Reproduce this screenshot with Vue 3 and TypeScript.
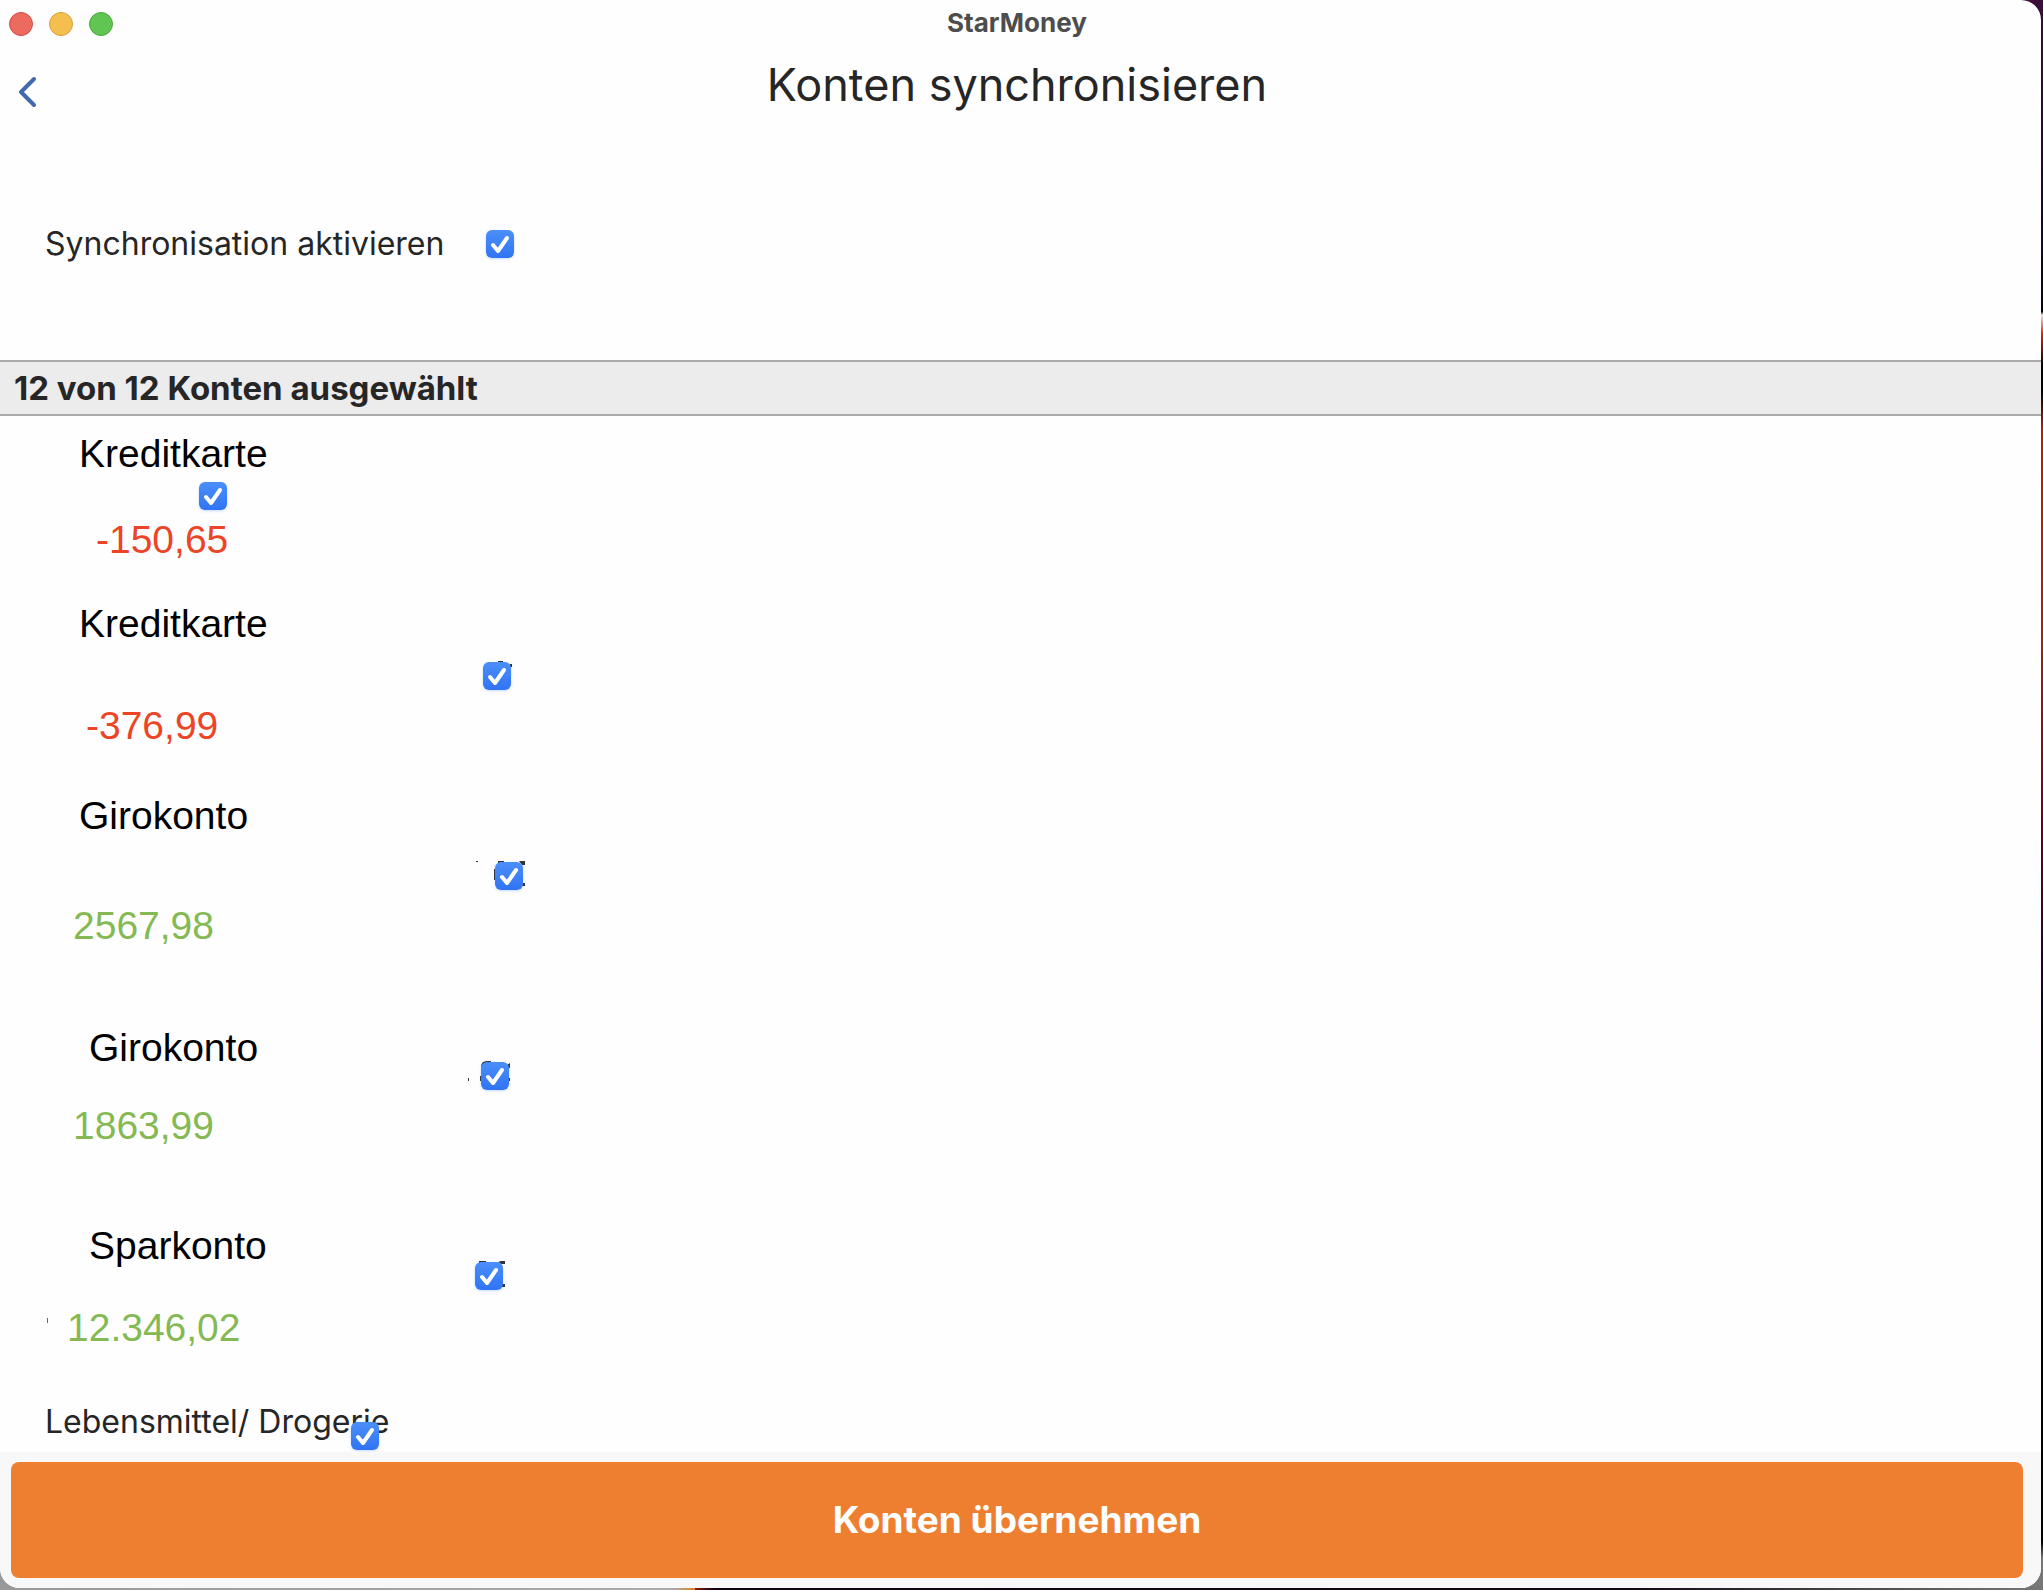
<script setup lang="ts">
import { ref } from 'vue'

interface Account {
  id: string
  name: string
  balance?: string
  kind: 'debit' | 'credit' | 'plain'
  layout: string
  remnant?: string
}

const syncEnabled = ref(true)

const accounts: Account[] = [
  { id: 'k1', name: 'Kreditkarte', balance: '-150,65', kind: 'debit', layout: 'row-card-short' },
  { id: 'k2', name: 'Kreditkarte', balance: '-376,99', kind: 'debit', layout: 'row-card', remnant: 'M25 9h5v1h-5zM37 12h2v3h-2z' },
  { id: 'g1', name: 'Girokonto', balance: '2567,98', kind: 'credit', layout: 'row-giro', remnant: 'M-9 9h2v1h-2zM13 9h6v4h-6zM9 17h3v11h-3zM34 9h6v4h-3zM36 31h4v3h-4z' },
  { id: 'g2', name: 'Girokonto', balance: '1863,99', kind: 'credit', layout: 'row-giro-low', remnant: 'M-3 26h1v3h-1zM10 15q0-6 6-6h4v4h-4zM9 24h2v5h-2zM36 13l3-2v5h-3zM37 26h2v3h-2z' },
  { id: 's1', name: 'Sparkonto', balance: '12.346,02', kind: 'credit', layout: 'row-savings', remnant: 'M14 9h7v2h-7zM33 10l3-1h4v3h-4zM36 32h4v3h-4z' },
  { id: 'l1', name: 'Lebensmittel/ Drogerie', kind: 'plain', layout: 'row-plain' },
]

const selected = ref<string[]>(accounts.map((a) => a.id))
</script>

<template>
  <div class="desktop">
    <main class="window">
      <div class="titlebar">
        <div class="lights">
          <button class="light close" type="button" aria-label="Schließen"></button>
          <button class="light minimize" type="button" aria-label="Minimieren"></button>
          <button class="light zoom" type="button" aria-label="Zoomen"></button>
        </div>
        <span class="app-name">StarMoney</span>
      </div>

      <header class="header">
        <button class="back" type="button" aria-label="Zurück">
          <svg width="20" height="32" viewBox="0 0 20 32" fill="none">
            <path d="M17 3 4 16l13 13" stroke="#4169ad" stroke-width="4" stroke-linecap="round" stroke-linejoin="round" />
          </svg>
        </button>
        <h1>Konten synchronisieren</h1>
      </header>

      <section class="sync">
        <label for="sync">Synchronisation aktivieren</label>
        <span class="check">
          <input id="sync" v-model="syncEnabled" type="checkbox" />
          <svg class="tick" viewBox="0 0 28 28"><path d="m7 15 5 6 9-13" /></svg>
        </span>
      </section>

      <h2 class="summary">12 von 12 Konten ausgewählt</h2>

      <ul class="accounts">
        <li v-for="a in accounts" :key="a.id" class="account" :class="[a.layout, a.kind]">
          <div class="details">
            <label class="name" :for="a.id">{{ a.name }}</label>
            <span v-if="a.balance" class="balance">{{ a.balance }}</span>
          </div>
          <span class="check">
            <svg v-if="a.remnant" class="remnant" viewBox="0 0 48 48"><path :d="a.remnant" /></svg>
            <input :id="a.id" v-model="selected" :value="a.id" type="checkbox" />
            <svg class="tick" viewBox="0 0 28 28"><path d="m7 15 5 6 9-13" /></svg>
          </span>
        </li>
      </ul>

      <footer class="footer">
        <button class="apply" type="button">Konten übernehmen</button>
      </footer>
    </main>
  </div>
</template>

<style>
body {
  margin: 0;
}
</style>

<style scoped>
.desktop {
  box-sizing: border-box;
  height: 100vh;
  padding: 0 2px 2px 0;
  font-family: Inter, "Liberation Sans", sans-serif;
  color: #262626;
  background:
    linear-gradient(90deg, #999 0, #aaa 33%, #e08020 34%, #8c1c10 34%, #0c0210 35%, #140818 80%, #444 90%, #777) bottom / 100% 3px no-repeat,
    linear-gradient(#3a0f3a 0, #12001e 19%, #000 19.6%, #e8e4dc 19.8%, #d0281a 21%, #000 23%, #000 24.6%, #b02010 27%, #a02414 40%, #600020 53%, #200030 61%, #000 68%, #000 97%, #777 98%) right / 30px 100% no-repeat,
    #999;
}
.window {
  display: flex;
  flex-direction: column;
  height: 100%;
  overflow: hidden;
  background: #fefefe;
  border-radius: 0 20px 20px 20px;
}
.titlebar,
.header {
  display: grid;
  align-items: center;
  padding-right: 7px;
}
.titlebar > *,
.header > * {
  grid-area: 1 / 1;
}
.titlebar {
  height: 48px;
}
.lights {
  display: flex;
  gap: 16px;
  padding-left: 9px;
}
.light {
  width: 24px;
  height: 24px;
  padding: 0;
  border: 1px solid;
  border-radius: 50%;
}
.close {
  background: #ec6a5e;
  border-color: #d05045;
}
.minimize {
  background: #f4bf4f;
  border-color: #d8a13a;
}
.zoom {
  background: #61c554;
  border-color: #4ca63c;
}
.app-name {
  justify-self: center;
  padding-bottom: 2px;
  font-size: 26px;
  font-weight: 700;
  line-height: 32px;
  color: #4d4d4d;
}
.header {
  height: 88px;
}
.back {
  justify-self: start;
  height: 32px;
  margin: 0 0 0 17px;
  padding: 0;
  background: none;
  border: 0;
}
.back svg {
  display: block;
}
h1 {
  justify-self: center;
  align-self: start;
  margin: 7px 0 0;
  font-size: 45px;
  font-weight: 400;
  line-height: 60px;
}
.sync {
  display: flex;
  align-items: center;
  height: 216px;
  gap: 42px;
  padding-left: 45px;
  font-size: 32px;
  line-height: 40px;
}
.check {
  position: relative;
  display: block;
  width: 28px;
  height: 28px;
}
.check input {
  position: relative;
  display: block;
  width: 28px;
  height: 28px;
  margin: 0;
  appearance: none;
  background: #fff;
  border-radius: 6px;
  box-shadow: 0 1px 3px #3478f644;
}
.check input:checked {
  background: linear-gradient(#4a8ff8, #3074f5);
}
.tick {
  position: absolute;
  inset: 0;
  width: 28px;
  height: 28px;
  fill: none;
  stroke: #fff;
  stroke-width: 4;
  stroke-linecap: round;
  stroke-linejoin: round;
  pointer-events: none;
}
.remnant {
  position: absolute;
  inset: -10px;
  width: 48px;
  height: 48px;
  overflow: visible;
  fill: #333;
}
.summary {
  box-sizing: border-box;
  height: 56px;
  flex: none;
  margin: 8px 0 0;
  padding: 6px 14px;
  font-size: 33px;
  font-weight: 700;
  line-height: 40px;
  background: #ececec;
  border: solid #aaa;
  border-width: 2px 0;
}
.accounts {
  flex: 1;
  min-height: 0;
  margin: 0;
  padding: 0;
  overflow: hidden;
  list-style: none;
}
.account {
  display: grid;
  grid-template-rows: 100%;
  align-items: center;
  height: 200px;
}
.account > * {
  grid-area: 1 / 1;
}
.details {
  box-sizing: border-box;
  display: flex;
  flex-direction: column;
  align-items: flex-start;
  justify-content: space-between;
  height: 100%;
  padding: 18px 0 28px;
  font-family: "Liberation Sans", Arial, sans-serif;
  font-size: 39px;
  line-height: 44px;
}
.name {
  margin-left: 79px;
  color: #000;
}
.balance {
  margin-left: 73px;
}
.debit .balance {
  margin-left: 86px;
  color: #ec4427;
}
.credit .balance {
  color: #85b954;
}
.account .check {
  margin-left: 481px;
}
.row-card-short {
  height: 160px;
}
.row-card-short .details {
  padding: 16px 0 14px;
}
.debit.row-card-short .balance {
  margin-left: 96px;
}
.row-card-short .check {
  margin-left: 199px;
}
.row-card .details {
  padding-top: 26px;
}
.row-card .check {
  margin-left: 483px;
}
.row-giro .check {
  margin-left: 495px;
}
.row-giro-low .details {
  padding-top: 50px;
}
.row-savings .details {
  padding: 48px 0 26px;
}
.row-giro-low .name,
.row-savings .name {
  margin-left: 89px;
}
.row-savings .balance {
  position: relative;
  margin-left: 67px;
}
.row-savings .balance::before {
  position: absolute;
  top: 12px;
  left: -20px;
  width: 1px;
  height: 5px;
  content: "";
  background: #2f8f2f;
}
.row-savings .check {
  margin-left: 475px;
}
.row-plain {
  height: 120px;
}
.row-plain .details {
  padding: 26px 0;
  font-family: inherit;
  font-size: 32px;
  line-height: 40px;
}
.row-plain .name {
  margin-left: 45px;
  color: inherit;
}
.row-plain .check {
  margin-left: 351px;
}
.footer {
  flex: none;
  padding: 10px 18px 10px 11px;
  background: #f8f8f8;
}
.apply {
  display: block;
  width: 100%;
  height: 116px;
  padding: 0;
  font: 700 37px/48px Inter, "Liberation Sans", sans-serif;
  color: #fff;
  background: #ee7f31;
  border: 0;
  border-radius: 8px;
}
</style>
